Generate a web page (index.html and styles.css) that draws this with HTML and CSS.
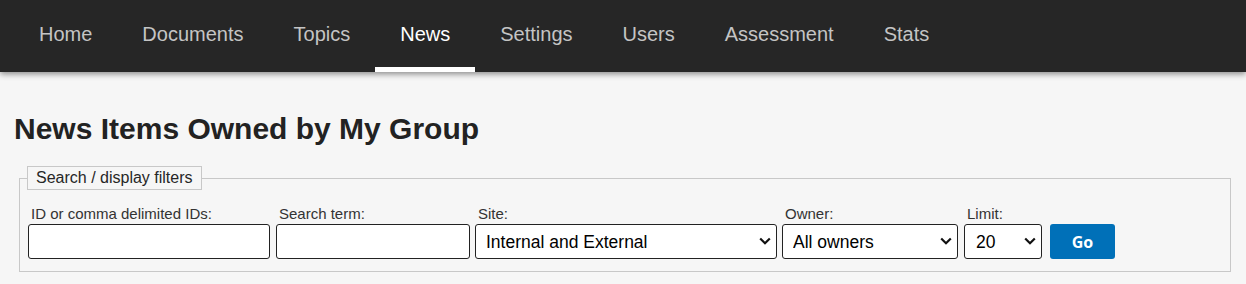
FILE: index.html
```html
<!DOCTYPE html>
<html lang="en">
<head>
    <meta charset="UTF-8">
    <meta name="viewport" content="width=device-width, initial-scale=1.0">
    <title>News Items Owned by My Group</title>
    <link rel="stylesheet" href="styles.css">
</head>
<body>
    <nav class="top-nav">
        <a href="#">Home</a>
        <a href="#">Documents</a>
        <a href="#">Topics</a>
        <a href="#" class="active">News</a>
        <a href="#">Settings</a>
        <a href="#">Users</a>
        <a href="#">Assessment</a>
        <a href="#">Stats</a>
    </nav>

    <div class="content">
        <h1>News Items Owned by My Group</h1>

        <fieldset class="filters">
            <legend>Search / display filters</legend>
            <div class="filter-row">
                <div class="field field-ids">
                    <label for="ids">ID or comma delimited IDs:</label>
                    <input type="text" id="ids">
                </div>
                <div class="field field-term">
                    <label for="term">Search term:</label>
                    <input type="text" id="term">
                </div>
                <div class="field field-site">
                    <label for="site">Site:</label>
                    <div class="select-wrap">
                        <select id="site">
                            <option>Internal and External</option>
                            <option>Internal</option>
                            <option>External</option>
                        </select>
                        <svg class="chevron" viewBox="0 0 12 8"><path d="M1.2 1.5 L6 6.2 L10.8 1.5"/></svg>
                    </div>
                </div>
                <div class="field field-owner">
                    <label for="owner">Owner:</label>
                    <div class="select-wrap">
                        <select id="owner">
                            <option>All owners</option>
                        </select>
                        <svg class="chevron" viewBox="0 0 12 8"><path d="M1.2 1.5 L6 6.2 L10.8 1.5"/></svg>
                    </div>
                </div>
                <div class="field field-limit">
                    <label for="limit">Limit:</label>
                    <div class="select-wrap">
                        <select id="limit">
                            <option>20</option>
                            <option>50</option>
                            <option>100</option>
                        </select>
                        <svg class="chevron" viewBox="0 0 12 8"><path d="M1.2 1.5 L6 6.2 L10.8 1.5"/></svg>
                    </div>
                </div>
                <button type="submit" class="go-btn">Go</button>
            </div>
        </fieldset>
    </div>
</body>
</html>
```

FILE: styles.css
```css
body {
    margin: 0;
    background-color: #f6f6f6;
    font-family: "Liberation Sans", Arial, sans-serif;
    color: #262626;
}

/* top navigation */
.top-nav {
    display: flex;
    height: 72px;
    padding-left: 14px;
    background-color: #262626;
    box-shadow: 0 2px 6px rgba(0, 0, 0, 0.45);
}

.top-nav a {
    display: flex;
    align-items: center;
    padding: 5px 25px 3px 25px;
    font-size: 20px;
    color: #c4c4c4;
    text-decoration: none;
    border-bottom: 5px solid transparent;
}

.top-nav a.active {
    color: #fff;
    border-bottom-color: #fff;
}

.content {
    padding: 0 14px;
}

h1 {
    font-size: 30px;
    font-weight: bold;
    color: #222;
    margin: 40px 0 20px 0;
    line-height: 34px;
}

/* filters box */
.filters {
    margin: 0 1px 0 5px;
    padding: 15px 8px 12px 8px;
    border: 1px solid #c8c8c8;
}

.filters legend {
    margin-left: -1px;
    padding: 0 8px;
    border: 1px solid #c8c8c8;
    font-size: 16px;
    line-height: 22px;
    color: #262626;
}

.filter-row {
    display: flex;
    align-items: flex-end;
    gap: 6px;
}

.field label {
    display: block;
    padding-left: 3px;
    margin-bottom: 2px;
    font-size: 15px;
    line-height: 17px;
    color: #333;
}

.field input,
.field select {
    display: block;
    height: 35px;
    box-sizing: border-box;
    border: 1px solid #222;
    border-radius: 3px;
    background-color: #fff;
    font-family: "Liberation Sans", Arial, sans-serif;
    font-size: 17.5px;
    color: #000;
}

.select-wrap {
    position: relative;
}

.field select {
    appearance: none;
    -webkit-appearance: none;
    padding: 0 26px 0 10px;
}

/* dropdown arrow drawn over the select */
.chevron {
    position: absolute;
    right: 6px;
    top: 13px;
    width: 12px;
    height: 8px;
    pointer-events: none;
}

.chevron path {
    fill: none;
    stroke: #111;
    stroke-width: 2.2;
}

.field-ids input { width: 242px; }
.field-term input { width: 194px; }
.field-site { margin-left: -1px; }
.field-site select { width: 302px; }
.field-owner { margin-left: -1px; }
.field-owner select { width: 176px; }
.field-limit select { width: 78px; padding-left: 11px; }

.go-btn {
    width: 65px;
    height: 35px;
    margin-left: 2px;
    border: none;
    border-radius: 3px;
    background-color: #0070b8;
    color: #fff;
    font-family: "Open Sans", sans-serif;
    font-size: 16px;
    font-weight: bold;
}
```
